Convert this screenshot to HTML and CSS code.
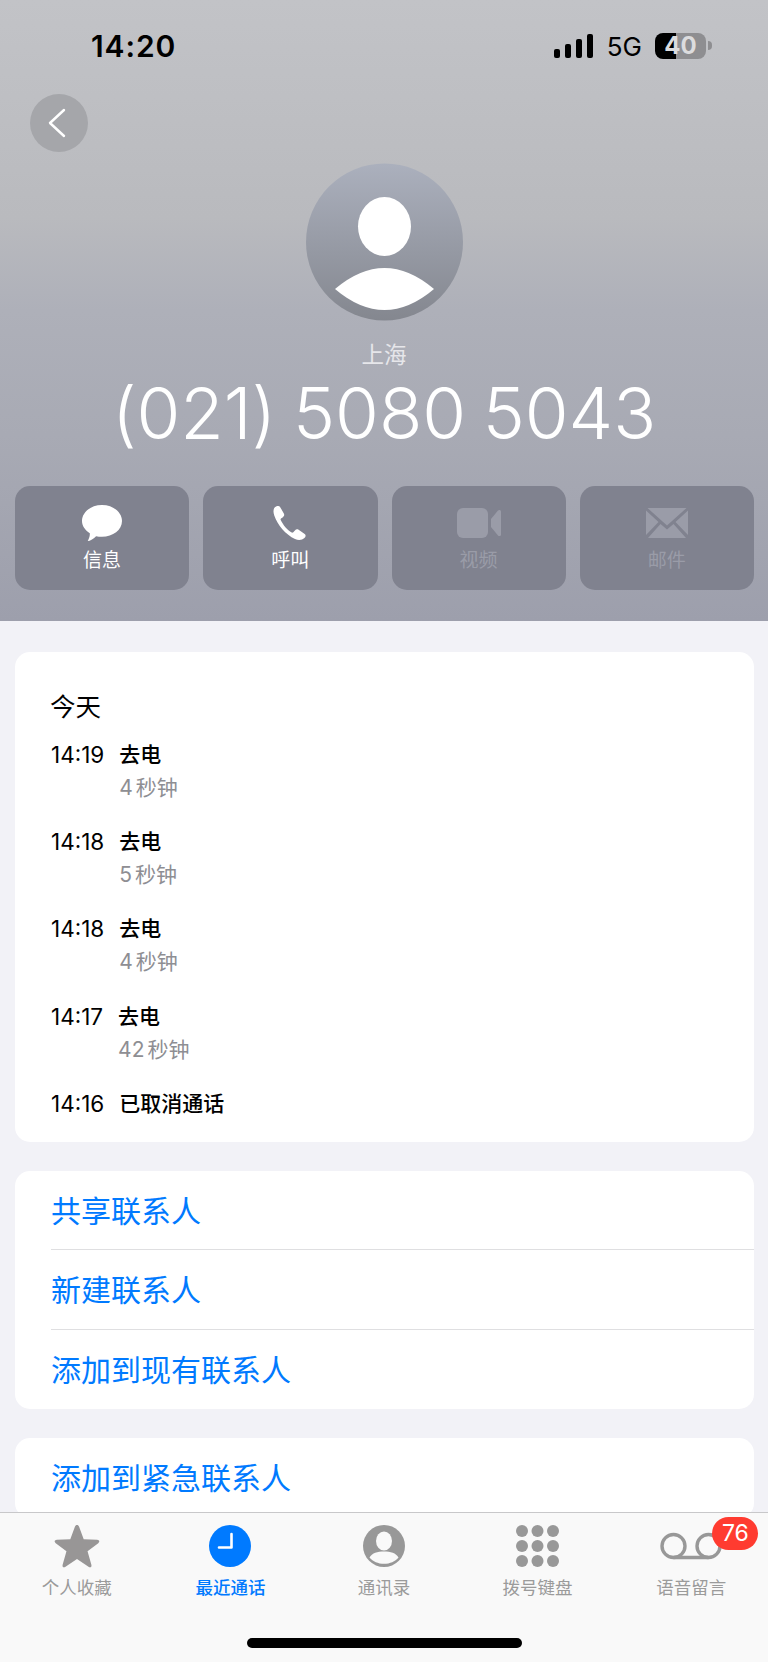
FILE: index.html
```html
<!DOCTYPE html>
<html>
<head>
  <title>(021) 5080 5043</title>
  <meta charset="utf-8" />
  <meta name="viewport" content="width=device-width, initial-scale=1.0" />
  <link rel="stylesheet" href="styles.css">
</head>
<body>
<header class="hero">
  <div class="status">
    <span class="clock">14:20</span>
    <div class="status-right">
      <svg class="signal" width="39" height="24" viewBox="0 0 39 24"><rect x="0" y="15" width="6" height="9" rx="2"/><rect x="11" y="10" width="6" height="14" rx="2"/><rect x="22" y="5" width="6" height="19" rx="2"/><rect x="33" y="0" width="6" height="24" rx="2"/></svg>
      <span class="net">5G</span>
      <div class="battery">40</div>
    </div>
  </div>

  <div class="back">
    <svg width="18" height="30" viewBox="0 0 18 30"><path d="M16 2 L2 15 L16 28" fill="none" stroke="#fff" stroke-width="2.4" stroke-linecap="round" stroke-linejoin="round"/></svg>
  </div>

  <svg class="avatar" width="157" height="158" viewBox="0 0 157 158">
    <defs><linearGradient id="av" x1="0" y1="0" x2="0" y2="1"><stop offset="0" stop-color="#abb0bd"/><stop offset="1" stop-color="#84878f"/></linearGradient></defs>
    <circle cx="78.5" cy="79" r="78.5" fill="url(#av)"/>
    <ellipse cx="78.5" cy="63.5" rx="26.5" ry="29.5" fill="#fff"/>
    <path d="M29 126 Q78.5 84 128 126 Q78.5 168 29 126 Z" fill="#fff"/>
  </svg>

  <div class="place">上海</div>
  <div class="number">(021) 5080 5043</div>

  <div class="actions">
    <div class="action">
      <svg width="40" height="38" viewBox="0 0 42 38"><path d="M21 0 C32.600 0 42 7.600 42 17 C42 26.400 32.600 33.500 21 33.500 C18.800 33.500 16.700 33.200 14.800 32.800 C12.500 35.500 8.500 37.600 6 38 C7.200 36 8.500 32.500 8.200 29.800 C3.200 26.700 0 22.100 0 17 C0 7.600 9.400 0 21 0 Z" fill="#fff"/></svg>
      <span>信息</span>
    </div>
    <div class="action">
      <svg width="36" height="38" viewBox="-1 -1 38 38"><path d="M2 1.500 C4 0 6.500 -0.500 7.500 1 L11.500 8 C12.300 9.400 11.800 10.800 10.500 11.800 L8.500 13.200 C8 13.600 7.900 14.200 8.200 14.800 C10.500 19.800 15.200 25.500 19.800 28 C20.400 28.300 21 28.200 21.500 27.700 L23.200 25.800 C24.300 24.600 25.800 24.300 27.100 25.200 L33.500 29.600 C35 30.600 34.700 32.500 33.200 33.800 C30.800 36 27 36.500 23.300 34.800 C13.500 30.300 4.700 19.800 1.400 10 C0.200 6.500 0.200 3.200 2 1.500 Z" fill="#fff"/></svg>
      <span>呼叫</span>
    </div>
    <div class="action off">
      <svg width="44" height="38" viewBox="0 0 44 30"><rect x="0" y="0" width="31" height="30" rx="6"/><path d="M34 11 L41 2.500 C42.200 1.300 44 2 44 3.500 L44 26.500 C44 28 42.200 28.700 41 27.500 L34 19 Z"/></svg>
      <span>视频</span>
    </div>
    <div class="action off">
      <svg width="42" height="38" viewBox="0 0 42 30"><path d="M1.500 0 L40.500 0 L21 17.500 Z M0 2.500 L12.500 14 L0 27 Z M42 2.500 L42 27 L29.500 14 Z M14.500 16 L21 21.500 L27.500 16 L40 30 L2 30 Z"/></svg>
      <span>邮件</span>
    </div>
  </div>
</header>

<main class="content">
  <section class="card history">
    <h2>今天</h2>
    <div class="calls">
      <div class="call">
        <span class="time">14:19</span>
        <div class="detail"><span class="kind">去电</span><span class="dur"><i>4</i>秒钟</span></div>
      </div>
      <div class="call">
        <span class="time">14:18</span>
        <div class="detail"><span class="kind">去电</span><span class="dur"><i>5</i>秒钟</span></div>
      </div>
      <div class="call">
        <span class="time">14:18</span>
        <div class="detail"><span class="kind">去电</span><span class="dur"><i>4</i>秒钟</span></div>
      </div>
      <div class="call">
        <span class="time">14:17</span>
        <div class="detail"><span class="kind">去电</span><span class="dur"><i>42</i>秒钟</span></div>
      </div>
      <div class="call">
        <span class="time">14:16</span>
        <div class="detail"><span class="kind">已取消通话</span></div>
      </div>
    </div>
  </section>

  <section class="card links">
    <a>共享联系人</a>
    <a>新建联系人</a>
    <a>添加到现有联系人</a>
  </section>

  <section class="card links">
    <a>添加到紧急联系人</a>
  </section>
</main>

<nav class="tabs">
  <div class="tab">
    <svg width="46" height="46" viewBox="0 0 48 46"><path d="M24 1 C25 1 25.700 1.700 26.200 3 L31 16 L45 16.600 C47.500 16.800 48 18.600 46.200 20 L35 28.600 L39 42.500 C39.600 44.800 38 46 36 44.600 L24 36.600 L12 44.600 C10 46 8.400 44.800 9 42.500 L13 28.600 L1.800 20 C0 18.600 0.500 16.800 3 16.600 L17 16 L21.800 3 C22.300 1.700 23 1 24 1 Z" fill="#989696"/></svg>
    <span>个人收藏</span>
  </div>
  <div class="tab active">
    <svg width="42" height="42" viewBox="0 0 42 42"><circle cx="21" cy="21" r="21" fill="#007aff"/><path d="M22.500 9 L22.500 22.500 L10 22.500" fill="none" stroke="#fff" stroke-width="2.600" stroke-linejoin="round" stroke-linecap="round"/></svg>
    <span>最近通话</span>
  </div>
  <div class="tab">
    <svg width="42" height="42" viewBox="0 0 42 42"><circle cx="21" cy="21" r="21" fill="#989898"/><ellipse cx="21" cy="16" rx="8" ry="9.500" fill="#f9f9f9"/><path d="M6.500 32.500 C9 28 14.500 26.500 21 26.500 C27.500 26.500 33 28 35.500 32.500 C32 36.500 27 38.800 21 38.800 C15 38.800 10 36.500 6.500 32.500 Z" fill="#f9f9f9"/></svg>
    <span>通讯录</span>
  </div>
  <div class="tab">
    <svg width="43" height="42" viewBox="0 0 43 42" fill="#989898"><circle cx="6" cy="6" r="6"/><circle cx="21.500" cy="6" r="6"/><circle cx="37" cy="6" r="6"/><circle cx="6" cy="21" r="6"/><circle cx="21.500" cy="21" r="6"/><circle cx="37" cy="21" r="6"/><circle cx="6" cy="36" r="6"/><circle cx="21.500" cy="36" r="6"/><circle cx="37" cy="36" r="6"/></svg>
    <span>拨号键盘</span>
  </div>
  <div class="tab">
    <svg width="62" height="42" viewBox="0 0 62 42"><g fill="none" stroke="#989898" stroke-width="3.400"><circle cx="13.500" cy="21" r="11.500"/><circle cx="48.500" cy="21" r="11.500"/><path d="M13.500 32.500 L48.500 32.500"/></g></svg>
    <span>语音留言</span>
    <b class="badge">76</b>
  </div>
  <div class="home-bar"></div>
</nav>
</body>
</html>
```

FILE: styles.css
```css
* {
  box-sizing: border-box;
}

html, body {
  margin: 0;
  padding: 0;
}

body {
  position: relative;
  width: 768px;
  height: 1662px;
  overflow: hidden;
  background: #f2f2f7;
  font-family: Inter, "Noto Sans CJK SC", sans-serif;
  color: #000;
}

/* top area */
.hero {
  height: 621px;
  padding-top: 29px;
  background: linear-gradient(180deg, #c2c3c7 0%, #b9babe 35%, #aeb0b9 50%, #a8aab4 70%, #9d9fac 100%);
}

.status {
  display: flex;
  align-items: center;
  justify-content: space-between;
  height: 34px;
  padding: 0 62px 0 91px;
}

.clock {
  font-size: 30px;
  font-weight: 600;
  letter-spacing: 0.9px;
}

.status-right {
  display: flex;
  align-items: center;
}

.signal {
  margin-right: 14px;
}

.net {
  font-size: 26px;
  font-weight: 400;
  margin-right: 13px;
}

.battery {
  position: relative;
  width: 51px;
  height: 26px;
  border-radius: 8px;
  background: linear-gradient(90deg, #000 0, #000 21px, #8e8e91 21px);
  color: #dcdcde;
  font-size: 24px;
  font-weight: 700;
  line-height: 26px;
  text-align: center;
}

.battery::after {
  content: "";
  position: absolute;
  left: 53px;
  top: 8px;
  width: 4px;
  height: 9px;
  border-radius: 0 4px 4px 0;
  background: #8e8e91;
}

.back {
  display: flex;
  align-items: center;
  justify-content: center;
  width: 58px;
  height: 58px;
  margin: 31px 0 0 30px;
  padding-right: 4px;
  border-radius: 50%;
  background: #a5a6aa;
}

.avatar {
  display: block;
  margin: 11px auto 0;
}

.place {
  margin-top: 18px;
  text-align: center;
  font-size: 22.500px;
  line-height: 32px;
  color: #e6e6ea;
}

.number {
  text-align: center;
  font-size: 71px;
  font-weight: 300;
  line-height: 84px;
  letter-spacing: -0.1px;
  word-spacing: -3px;
  color: #fff;
}

.actions {
  display: flex;
  gap: 14px;
  margin: 31px 14px 0 15px;
}

.action {
  display: flex;
  flex: 1;
  flex-direction: column;
  align-items: center;
  height: 104px;
  border-radius: 15px;
  background: #80828f;
  color: #fff;
  font-size: 19px;
  line-height: 26px;
}

.action svg {
  height: 38px;
  margin-top: 18px;
  margin-bottom: 6px;
  fill: #9a9ca8;
}

.action.off {
  color: #9a9ca8;
}

/* cards */
.content {
  display: flex;
  flex-direction: column;
  gap: 29px;
  padding: 31px 14px 0 15px;
}

.card {
  border-radius: 15px;
  background: #fff;
}

.history {
  padding: 37px 36px 23px 35px;
}

.history h2 {
  margin: 0 0 15px;
  font-size: 25.500px;
  font-weight: 400;
  line-height: 36px;
}

.calls {
  display: flex;
  flex-direction: column;
  gap: 24.200px;
}

.call {
  display: flex;
  gap: 15px;
  font-size: 21px;
  line-height: 30px;
}

.time {
  margin-left: 1px;
  font-size: 22.500px;
}

.detail {
  display: flex;
  flex-direction: column;
  gap: 3px;
}

.kind {
  font-weight: 500;
}

.dur {
  color: #8e8e93;
}

.dur i {
  margin-right: 3px;
  font-style: normal;
}

.links a {
  display: block;
  height: 79.500px;
  margin-left: 36px;
  border-bottom: 1px solid #dfdfe1;
  color: #007aff;
  font-size: 30px;
  line-height: 80px;
}

.links a:last-child {
  border-bottom: 0;
}

/* tab bar sits over the scrolled content */
.tabs {
  position: absolute;
  left: 0;
  right: 0;
  bottom: 0;
  display: flex;
  height: 150px;
  border-top: 1px solid #c8c8ca;
  background: #f9f9f9;
}

.tab {
  position: relative;
  display: flex;
  flex: 1;
  flex-direction: column;
  align-items: center;
  color: #9b9b9b;
  font-size: 17.500px;
  line-height: 24px;
}

.tab svg {
  height: 46px;
  margin-top: 10px;
  margin-bottom: 7px;
}

.tab.active {
  color: #007aff;
  font-weight: 500;
}

.badge {
  position: absolute;
  left: 98px;
  top: 4px;
  width: 46px;
  height: 33px;
  border-radius: 17px;
  background: #ff3b30;
  color: #fff;
  font-size: 23px;
  font-weight: 400;
  line-height: 33px;
  text-align: center;
}

.home-bar {
  position: absolute;
  left: 247px;
  bottom: 14px;
  width: 275px;
  height: 10px;
  border-radius: 5px;
  background: #000;
}
```
